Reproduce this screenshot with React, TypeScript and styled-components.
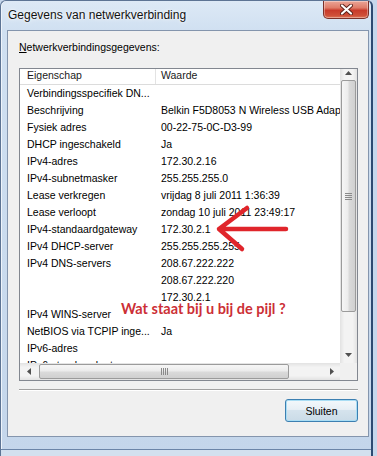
import React from "react";
import styled, { createGlobalStyle } from "styled-components";

const GlobalStyle = createGlobalStyle`
  html, body { margin: 0; padding: 0; }
  body {
    width: 377px;
    height: 456px;
    overflow: hidden;
    background: #c6d7ec;
    font-family: "Liberation Sans", Arial, sans-serif;
  }
`;

const Window = styled.div`
  position: relative;
  box-sizing: border-box;
  width: 373px;
  height: 456px;
  display: flex;
  flex-direction: column;
  border-top: 1px solid #5d7494;
  border-left: 1px solid #5d7494;
  border-right: 2px solid #2d4a72;
  border-radius: 6px 6px 0 0;
  background: linear-gradient(180deg, #dde9f6 0px, #d0e0f1 30px, #c4d6eb 100%);
  box-shadow: inset 1px 0 0 #eef4fb;
`;

const TitleBar = styled.div`
  height: 29px;
  flex-shrink: 0;
  display: flex;
  align-items: flex-start;
`;

const Title = styled.div`
  padding: 7px 0 0 7px;
  font-size: 12px;
  line-height: 14px;
  color: #111;
  text-shadow: 0 0 5px rgba(255, 255, 255, 0.95), 0 0 2px rgba(255, 255, 255, 0.9);
`;

const CloseButton = styled.div`
  margin-left: auto;
  margin-right: 2px;
  width: 46px;
  height: 18px;
  box-sizing: border-box;
  border: 1px solid #7a3029;
  border-top: none;
  border-radius: 0 0 5px 5px;
  background: linear-gradient(180deg, #eaa597 0%, #df7c69 40%, #c83a2a 55%, #cf4f38 85%, #de7556 100%);
  box-shadow: inset 0 0 0 1px rgba(255, 255, 255, 0.35);
  display: flex;
  align-items: center;
  justify-content: center;
`;

const Client = styled.div`
  flex: 1;
  margin: 0 2px 0 6px;
  border: 1px solid #8495ad;
  background: #f0f0f0;
  padding: 9px 10px 0 11px;
  display: flex;
  flex-direction: column;
`;

const BottomFrame = styled.div`
  flex: 0 0 19px;
  box-shadow: inset 0 -6px 0 #d3e0ef, inset 0 -7px 0 #6b85a8;
`;

const GroupLabel = styled.div`
  font-size: 10.5px;
  line-height: 15px;
  color: #000;
  margin-bottom: 13px;
`;

const ListBox = styled.div`
  box-sizing: border-box;
  width: 339px;
  height: 313px;
  border: 1px solid #828790;
  background: #fff;
  display: grid;
  grid-template-columns: 320px 17px;
  grid-template-rows: 294px 17px;
`;

const ListContent = styled.div`
  grid-column: 1;
  grid-row: 1;
  overflow: hidden;
`;

const Header = styled.div`
  display: grid;
  grid-template-columns: 136px 300px;
  height: 15px;
  border-bottom: 1px solid #dcdcdc;
  font-size: 10.5px;
  color: #1a1a1a;
`;

const HeaderCell = styled.div<{ $first?: boolean }>`
  padding-left: ${(p) => (p.$first ? 7 : 5)}px;
  line-height: 12px;
  border-right: ${(p) => (p.$first ? "1px solid #e3e3e3" : "none")};
  white-space: nowrap;
`;

const Row = styled.div`
  display: grid;
  grid-template-columns: 136px 300px;
  height: 17px;
  line-height: 17px;
  font-size: 10.5px;
  color: #000;
  white-space: nowrap;
`;

const Cell = styled.div<{ $first?: boolean }>`
  padding-left: ${(p) => (p.$first ? 7 : 5)}px;
  overflow: hidden;
`;

const VScroll = styled.div`
  grid-column: 2;
  grid-row: 1;
  display: flex;
  flex-direction: column;
  background: linear-gradient(90deg, #e2e2e2 0%, #f3f3f3 25%, #f3f3f3 75%, #e2e2e2 100%);
`;

const HScroll = styled.div`
  grid-column: 1;
  grid-row: 2;
  display: flex;
  background: linear-gradient(180deg, #e2e2e2 0%, #f3f3f3 25%, #f3f3f3 75%, #e2e2e2 100%);
`;

const Corner = styled.div`
  grid-column: 2;
  grid-row: 2;
  background: #f0f0f0;
`;

const ArrowButton = styled.div<{ $len: number; $top?: boolean }>`
  flex: 0 0 ${(p) => p.$len}px;
  display: flex;
  align-items: ${(p) => (p.$top ? "flex-start" : "center")};
  justify-content: center;
  padding-top: ${(p) => (p.$top ? 2 : 0)}px;
  box-sizing: border-box;
`;

const VTrack = styled.div`
  flex: 1;
  display: flex;
  flex-direction: column;
`;

const HTrack = styled.div`
  flex: 1;
  display: flex;
`;

const VThumb = styled.div`
  height: 232px;
  margin: 0 1px;
  box-sizing: border-box;
  border: 1px solid #9b9b9b;
  border-radius: 2px;
  background: linear-gradient(90deg, #f6f6f6 0%, #ececec 45%, #dadada 55%, #d0d0d0 100%);
  display: flex;
  align-items: center;
  justify-content: center;
`;

const HThumb = styled.div`
  width: 250px;
  margin: 1px 0 1px 2px;
  box-sizing: border-box;
  border: 1px solid #9b9b9b;
  border-radius: 2px;
  background: linear-gradient(180deg, #f6f6f6 0%, #ececec 45%, #dadada 55%, #d0d0d0 100%);
  display: flex;
  align-items: center;
  justify-content: center;
`;

const Separator = styled.div`
  margin-top: 8px;
  width: 339px;
  border-top: 1px solid #a0a0a0;
  border-bottom: 1px solid #ffffff;
`;

const ButtonRow = styled.div`
  width: 339px;
  margin-top: 8px;
  display: flex;
  justify-content: flex-end;
`;

const PushButton = styled.button`
  width: 73px;
  height: 23px;
  box-sizing: border-box;
  border: 1px solid #3c7fb1;
  border-radius: 3px;
  background: linear-gradient(180deg, #f3f8fb 0%, #e7eff5 45%, #d5e3ed 50%, #cadbe7 100%);
  box-shadow: inset 0 0 0 1px #a9ddf4;
  font-family: "Liberation Sans", Arial, sans-serif;
  font-size: 10.5px;
  color: #000;
  padding: 0;
`;

const ArrowMark = styled.svg`
  position: absolute;
  left: 199px;
  top: 199px;
  width: 92px;
  height: 56px;
  pointer-events: none;
`;

const Remark = styled.div`
  position: absolute;
  left: 120px;
  top: 300px;
  font-family: Lato, "Liberation Sans", sans-serif;
  font-weight: 700;
  font-size: 14.5px;
  line-height: 16px;
  color: #cc2f36;
  white-space: nowrap;
`;

const rows: [string, string][] = [
  ["Verbindingsspecifiek DN...", ""],
  ["Beschrijving", "Belkin F5D8053 N Wireless USB Adapter"],
  ["Fysiek adres", "00-22-75-0C-D3-99"],
  ["DHCP ingeschakeld", "Ja"],
  ["IPv4-adres", "172.30.2.16"],
  ["IPv4-subnetmasker", "255.255.255.0"],
  ["Lease verkregen", "vrijdag 8 juli 2011 1:36:39"],
  ["Lease verloopt", "zondag 10 juli 2011 23:49:17"],
  ["IPv4-standaardgateway", "172.30.2.1"],
  ["IPv4 DHCP-server", "255.255.255.255"],
  ["IPv4 DNS-servers", "208.67.222.222"],
  ["", "208.67.222.220"],
  ["", "172.30.2.1"],
  ["IPv4 WINS-server", ""],
  ["NetBIOS via TCPIP inge...", "Ja"],
  ["IPv6-adres", ""],
  ["IPv6-standaardgateway", ""],
];

const Tri = ({ dir }: { dir: "up" | "down" | "left" | "right" }) => {
  const pts = {
    up: "0,4 7,4 3.5,0",
    down: "0,0 7,0 3.5,4",
    left: "4,0 4,7 0,3.5",
    right: "0,0 0,7 4,3.5",
  }[dir];
  const vertical = dir === "up" || dir === "down";
  return (
    <svg width={vertical ? 7 : 4} height={vertical ? 4 : 7} viewBox={vertical ? "0 0 7 4" : "0 0 4 7"}>
      <polygon points={pts} fill="#505050" />
    </svg>
  );
};

export default function App() {
  return (
    <>
      <GlobalStyle />
      <Window>
        <TitleBar>
          <Title>Gegevens van netwerkverbinding</Title>
          <CloseButton>
            <svg width="13" height="11" viewBox="0 0 13 11">
              <path d="M2 1.5 L11 9.5 M11 1.5 L2 9.5" stroke="#5a2018" strokeWidth="4" strokeLinecap="round" />
              <path d="M2 1.5 L11 9.5 M11 1.5 L2 9.5" stroke="#ffffff" strokeWidth="2.2" strokeLinecap="round" />
            </svg>
          </CloseButton>
        </TitleBar>
        <Client>
          <GroupLabel>
            <u>N</u>etwerkverbindingsgegevens:
          </GroupLabel>
          <ListBox>
            <ListContent>
              <Header>
                <HeaderCell $first>Eigenschap</HeaderCell>
                <HeaderCell>Waarde</HeaderCell>
              </Header>
              {rows.map(([k, v], i) => (
                <Row key={i}>
                  <Cell $first>{k}</Cell>
                  <Cell>{v}</Cell>
                </Row>
              ))}
            </ListContent>
            <VScroll>
              <ArrowButton $len={11} $top>
                <Tri dir="up" />
              </ArrowButton>
              <VTrack>
                <VThumb>
                  <svg width="7" height="7" viewBox="0 0 7 7">
                    <path d="M0 0.5H7M0 2.5H7M0 4.5H7M0 6.5H7" stroke="#8a8a8a" strokeWidth="1" />
                  </svg>
                </VThumb>
              </VTrack>
              <ArrowButton $len={17}>
                <Tri dir="down" />
              </ArrowButton>
            </VScroll>
            <HScroll>
              <ArrowButton $len={17}>
                <Tri dir="left" />
              </ArrowButton>
              <HTrack>
                <HThumb>
                  <svg width="7" height="7" viewBox="0 0 7 7">
                    <path d="M0.5 0V7M2.5 0V7M4.5 0V7M6.5 0V7" stroke="#8a8a8a" strokeWidth="1" />
                  </svg>
                </HThumb>
              </HTrack>
              <ArrowButton $len={17}>
                <Tri dir="right" />
              </ArrowButton>
            </HScroll>
            <Corner />
          </ListBox>
          <Separator />
          <ButtonRow>
            <PushButton>Sluiten</PushButton>
          </ButtonRow>
        </Client>
        <BottomFrame />
        <ArrowMark viewBox="0 0 92 56">
          <path
            d="M86 29 L19 29 M47 8 L19 29 L42 49"
            fill="none"
            stroke="#e0252b"
            strokeWidth="4.5"
            strokeLinecap="round"
            strokeLinejoin="round"
          />
        </ArrowMark>
        <Remark>Wat staat bij u bij de pijl ?</Remark>
      </Window>
    </>
  );
}
